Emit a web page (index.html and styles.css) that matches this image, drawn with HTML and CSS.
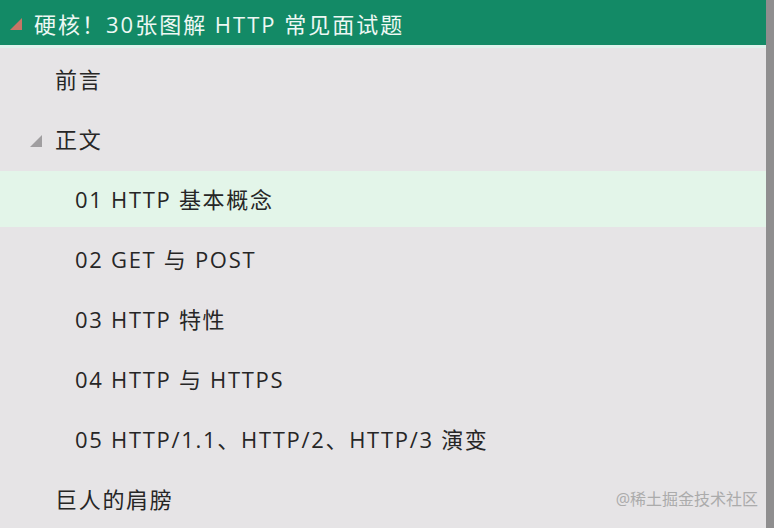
FILE: index.html
```html
<!DOCTYPE html>
<html lang="zh">
<head>
<meta charset="utf-8">
<link rel="stylesheet" href="styles.css">
</head>
<body>
<div class="pane">
  <div class="main">
    <div class="header">
      <span class="tri tri-red"></span>
      <span class="title">硬核！30张图解 HTTP 常见面试题</span>
    </div>
    <div class="sep"></div>
    <ul class="tree">
      <li class="row lvl1"><span class="label">前言</span></li>
      <li class="row lvl1 has-tri"><span class="tri tri-gray"></span><span class="label">正文</span></li>
      <li class="row lvl2 active"><span class="label">01 HTTP 基本概念</span></li>
      <li class="row lvl2"><span class="label">02 GET 与 POST</span></li>
      <li class="row lvl2"><span class="label">03 HTTP 特性</span></li>
      <li class="row lvl2"><span class="label">04 HTTP 与 HTTPS</span></li>
      <li class="row lvl2"><span class="label">05 HTTP/1.1、HTTP/2、HTTP/3 演变</span></li>
      <li class="row lvl1"><span class="label">巨人的肩膀</span><span class="watermark">@稀土掘金技术社区</span></li>
    </ul>
  </div>
  <div class="edge"></div>
</div>
</body>
</html>
```

FILE: styles.css
```css
* { box-sizing: border-box; }
html, body { margin: 0; padding: 0; }
body {
  width: 774px;
  height: 528px;
  overflow: hidden;
  background: #e6e4e6;
  font-family: "Open Sans", "Noto Sans CJK SC", sans-serif;
}
.pane {
  display: flex;
  height: 528px;
}
.main {
  flex: 1;
  display: flex;
  flex-direction: column;
}
.edge {
  width: 8px;
  background: #8f8e8f;
}
.header {
  height: 47px;
  background: #138a66;
  display: flex;
  align-items: center;
  padding-left: 10px;
}
.title {
  color: #eef8f4;
  font-size: 22px;
  margin-left: 12px;
  letter-spacing: 2px;
}
.sep {
  height: 3px;
  background: #dff2ec;
}
.tri {
  display: inline-block;
  width: 0;
  height: 0;
  border-style: solid;
}
.tri-red {
  border-width: 0 0 12px 12px;
  border-color: transparent transparent #c77566 transparent;
  margin-top: 2px;
}
.tri-gray {
  border-width: 0 0 12px 12px;
  border-color: transparent transparent #a09ea0 transparent;
  margin-right: 13px;
  margin-top: 5px;
}
.tree {
  list-style: none;
  margin: 0;
  padding: 0;
}
.row {
  height: 60px;
  display: flex;
  align-items: center;
  color: #262626;
  font-size: 22px;
  letter-spacing: 1.7px;
  position: relative;
}
.lvl1 { padding-left: 55px; }
.lvl1.has-tri { padding-left: 30px; }
.lvl2 { padding-left: 75px; }
.row.active {
  background: linear-gradient(#e6e4e6 0, #e6e4e6 3px, #e3f5e9 3px, #e3f5e9 59px, #e6e4e6 59px);
}
.watermark {
  position: absolute;
  right: 8px;
  top: 18px;
  font-size: 16px;
  letter-spacing: 0;
  color: #ababab;
}
```
